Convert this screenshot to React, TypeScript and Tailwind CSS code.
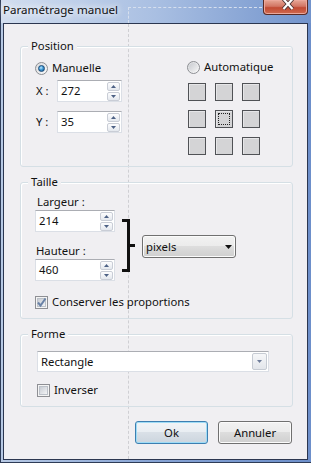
import React from 'react';

const font = "font-['Noto_Sans',sans-serif]";

const Radio = ({ checked }: { checked?: boolean }) => (
  <span className="w-[13px] h-[13px] rounded-full border border-[#8c8e93] bg-gradient-to-br from-[#d9dadd] to-[#fbfbfb] flex items-center justify-center shrink-0">
    {checked ? (
      <span className="w-[7px] h-[7px] rounded-full bg-[radial-gradient(circle_at_40%_35%,#bfe8ff_0%,#3f9ad6_45%,#0f4e86_100%)] border border-[#1a4a78]" />
    ) : (
      <span className="w-[9px] h-[9px] rounded-full bg-gradient-to-br from-[#c9cbd0] to-[#f4f4f5]" />
    )}
  </span>
);

const Checkbox = ({ checked }: { checked?: boolean }) => (
  <span className="w-[13px] h-[13px] border border-[#8e8f94] bg-[#f4f4f4] flex items-center justify-center shrink-0">
    <span className="relative w-[9px] h-[9px] bg-gradient-to-br from-[#c8ccd3] to-[#f3f4f6] border border-[#bcc1c9]">
      {checked && (
        <svg width="11" height="11" viewBox="0 0 11 11" className="absolute left-[-2px] top-[-2px]">
          <path d="M2 5.5 L4.5 8.5 L9.5 1.5" stroke="#6a82a6" strokeWidth="2" fill="none" />
        </svg>
      )}
    </span>
  </span>
);

const Arrow = ({ up }: { up?: boolean }) => (
  <svg width="5" height="3" viewBox="0 0 5 3">
    <path d={up ? 'M0 3 L2.5 0 L5 3 Z' : 'M0 0 L5 0 L2.5 3 Z'} fill="#4d6185" />
  </svg>
);

const SpinInput = ({ value, w }: { value: string; w: string }) => (
  <div className={`${w} h-[22px] bg-white border border-[#dbdfe6] border-t-[#abadb3] flex items-center`}>
    <span className="pl-[3px] flex-1 leading-[16px]">{value}</span>
    <div className="flex flex-col gap-px mr-px">
      <span className="w-[13px] h-[9px] border border-[#c9cdd6] rounded-[2px] bg-gradient-to-b from-[#fdfdfe] to-[#e4e8ee] flex items-center justify-center">
        <Arrow up />
      </span>
      <span className="w-[13px] h-[9px] border border-[#c9cdd6] rounded-[2px] bg-gradient-to-b from-[#fdfdfe] to-[#e4e8ee] flex items-center justify-center">
        <Arrow />
      </span>
    </div>
  </div>
);

const Group = ({ label, className, children }: { label: string; className: string; children: React.ReactNode }) => (
  <div className={`relative ml-[16px] w-[273px] border border-[#d5dfe5] rounded-[3px] shadow-[inset_1px_1px_0_#ffffff] ${className}`}>
    <span className="absolute left-[7px] top-[-9px] px-[3px] leading-[16px] bg-[#f0eff2]">{label}</span>
    {children}
  </div>
);

const Cell = ({ focus }: { focus?: boolean }) => (
  <div className="w-[18px] h-[18px] border border-[#505256] bg-[#d4d4d6] shadow-[inset_1px_1px_0_#e6e6e8] flex items-center justify-center">
    {focus && <div className="w-[12px] h-[12px] border border-dotted border-[#222]" />}
  </div>
);

const Button = ({ label, w, def }: { label: string; w: string; def?: boolean }) => (
  <div
    className={`${w} h-[23px] rounded-[3px] border flex items-center justify-center leading-[16px] ${
      def
        ? 'border-[#3c7fb1] shadow-[inset_0_0_0_1px_#9fdcf6] bg-[linear-gradient(#f1f4f7_0%,#e8edf2_50%,#d9e0e7_50%,#ccd5de_100%)]'
        : 'border-[#707070] shadow-[inset_0_0_0_1px_#fbfbfb] bg-[linear-gradient(#f2f2f2_0%,#ebebeb_50%,#dddddd_50%,#cfcfcf_100%)]'
    }`}
  >
    {label}
  </div>
);

export default function App() {
  return (
    <div className={`${font} text-[11.3px] text-[#111] relative w-[311px] h-[463px] border-l border-b border-[#2e3c57] bg-gradient-to-r from-[#b7c9e4] via-[#86a3d4] to-[#6d8fca]`}>
      {/* title bar */}
      <div className="relative h-[23px] flex items-start bg-gradient-to-r from-[#d2deef] via-[#a9bfe2] to-[#7394cc]">
        <span className="pl-[2px] pt-[2px] text-[11.6px] leading-[16px] [text-shadow:0_0_6px_#ffffff,0_0_10px_#ffffff]">Paramétrage manuel</span>
        <div className="absolute left-[127px] top-[7px] w-[134px] h-[16px] border-l border-t border-dashed border-[#d6dfee]" />
        <div className="ml-auto mr-[3px] w-[45px] h-[15px] rounded-b-[4px] border border-t-0 border-[#5a2a24] bg-[linear-gradient(#e7a796_0%,#d27563_45%,#c24a33_55%,#cf6a4f_100%)] shadow-[inset_0_0_0_1px_#eba79a] flex justify-center">
          <svg width="12" height="10" viewBox="0 0 12 10" className="ml-[5px]">
            <path d="M1.5 -1 L10.5 9 M10.5 -1 L1.5 9" stroke="#4b3434" strokeWidth="4" />
            <path d="M1.5 -1 L10.5 9 M10.5 -1 L1.5 9" stroke="#ffffff" strokeWidth="2.2" />
          </svg>
        </div>
      </div>

      {/* client area */}
      <div className="relative ml-[2px] w-[305px] h-[437px] border border-[#2b3650] bg-[#f0eff2]">
        <div className="absolute left-[124px] top-0 bottom-0 border-l border-dashed border-[#cfcfd3]" />
        <div className="relative z-10 flex flex-col">
          <Group label="Position" className="mt-[22px] h-[121px]">
            <div className="flex items-start">
              <div className="ml-[14px] mt-[14px] flex flex-col">
                <div className="h-[14px] flex items-center gap-[4px]">
                  <Radio checked />
                  <span className="leading-[16px]">Manuelle</span>
                </div>
                <div className="mt-[5px] flex items-center">
                  <span className="w-[22px] pl-[1px] leading-[16px]">X :</span>
                  <SpinInput value="272" w="w-[65px]" />
                </div>
                <div className="mt-[9px] flex items-center">
                  <span className="w-[22px] pl-[1px] leading-[16px]">Y :</span>
                  <SpinInput value="35" w="w-[65px]" />
                </div>
              </div>
              <div className="ml-[65px] mt-[13px] flex flex-col">
                <div className="h-[14px] flex items-center gap-[4px]">
                  <Radio />
                  <span className="leading-[16px]">Automatique</span>
                </div>
                <div className="ml-[1px] mt-[9px] grid grid-cols-3 gap-[9px] w-max">
                  <Cell />
                  <Cell />
                  <Cell />
                  <Cell />
                  <Cell focus />
                  <Cell />
                  <Cell />
                  <Cell />
                  <Cell />
                </div>
              </div>
            </div>
          </Group>

          <Group label="Taille" className="mt-[15px] h-[137px]">
            <div className="flex items-start">
              <div className="ml-[14px] w-[80px] flex flex-col">
                <span className="mt-[11px] pl-[2px] leading-[16px]">Largeur :</span>
                <SpinInput value="214" w="w-[80px]" />
                <span className="mt-[11px] pl-[1px] leading-[16px]">Hauteur :</span>
                <SpinInput value="460" w="w-[80px]" />
              </div>
              <svg width="14" height="53" viewBox="0 0 14 53" className="ml-[7px] mt-[36px]">
                <path d="M0 1.5 H6.5 V51.5 H0" stroke="#111" strokeWidth="3" fill="none" />
                <path d="M6.5 26.5 H13" stroke="#111" strokeWidth="3" fill="none" />
              </svg>
              <div className="ml-[6px] mt-[52px] w-[94px] h-[23px] rounded-[3px] border border-[#707070] shadow-[inset_0_0_0_1px_#fbfbfb] bg-[linear-gradient(#f2f2f2_0%,#ebebeb_50%,#dddddd_50%,#cfcfcf_100%)] flex items-center pl-[3px] pr-[3px]">
                <span className="flex-1 leading-[16px]">pixels</span>
                <svg width="7" height="4" viewBox="0 0 7 4">
                  <path d="M0 0 H7 L3.5 4 Z" fill="#111" />
                </svg>
              </div>
            </div>
            <div className="ml-[14px] mt-[13px] flex items-center gap-[4px]">
              <Checkbox checked />
              <span className="leading-[16px] whitespace-nowrap">Conserver les proportions</span>
            </div>
          </Group>

          <Group label="Forme" className="mt-[15px] h-[73px]">
            <div className="ml-[16px] mt-[16px] w-[232px] h-[21px] bg-white border border-[#dbdfe6] border-t-[#abadb3] flex items-center">
              <span className="flex-1 pl-[3px] leading-[16px]">Rectangle</span>
              <span className="mr-px w-[15px] h-[17px] border border-[#c6cbd3] rounded-[2px] bg-gradient-to-b from-[#f6f7f9] to-[#e3e6eb] flex items-center justify-center">
                <svg width="5" height="3" viewBox="0 0 5 3">
                  <path d="M0 0 H5 L2.5 3 Z" fill="#6e7c99" />
                </svg>
              </span>
            </div>
            <div className="ml-[16px] mt-[10px] flex items-center gap-[4px]">
              <Checkbox />
              <span className="leading-[16px]">Inverser</span>
            </div>
          </Group>

          <div className="mt-[14px] pr-[15px] flex justify-end gap-[10px]">
            <Button label="Ok" w="w-[73px]" def />
            <Button label="Annuler" w="w-[74px]" />
          </div>
        </div>
      </div>
    </div>
  );
}
